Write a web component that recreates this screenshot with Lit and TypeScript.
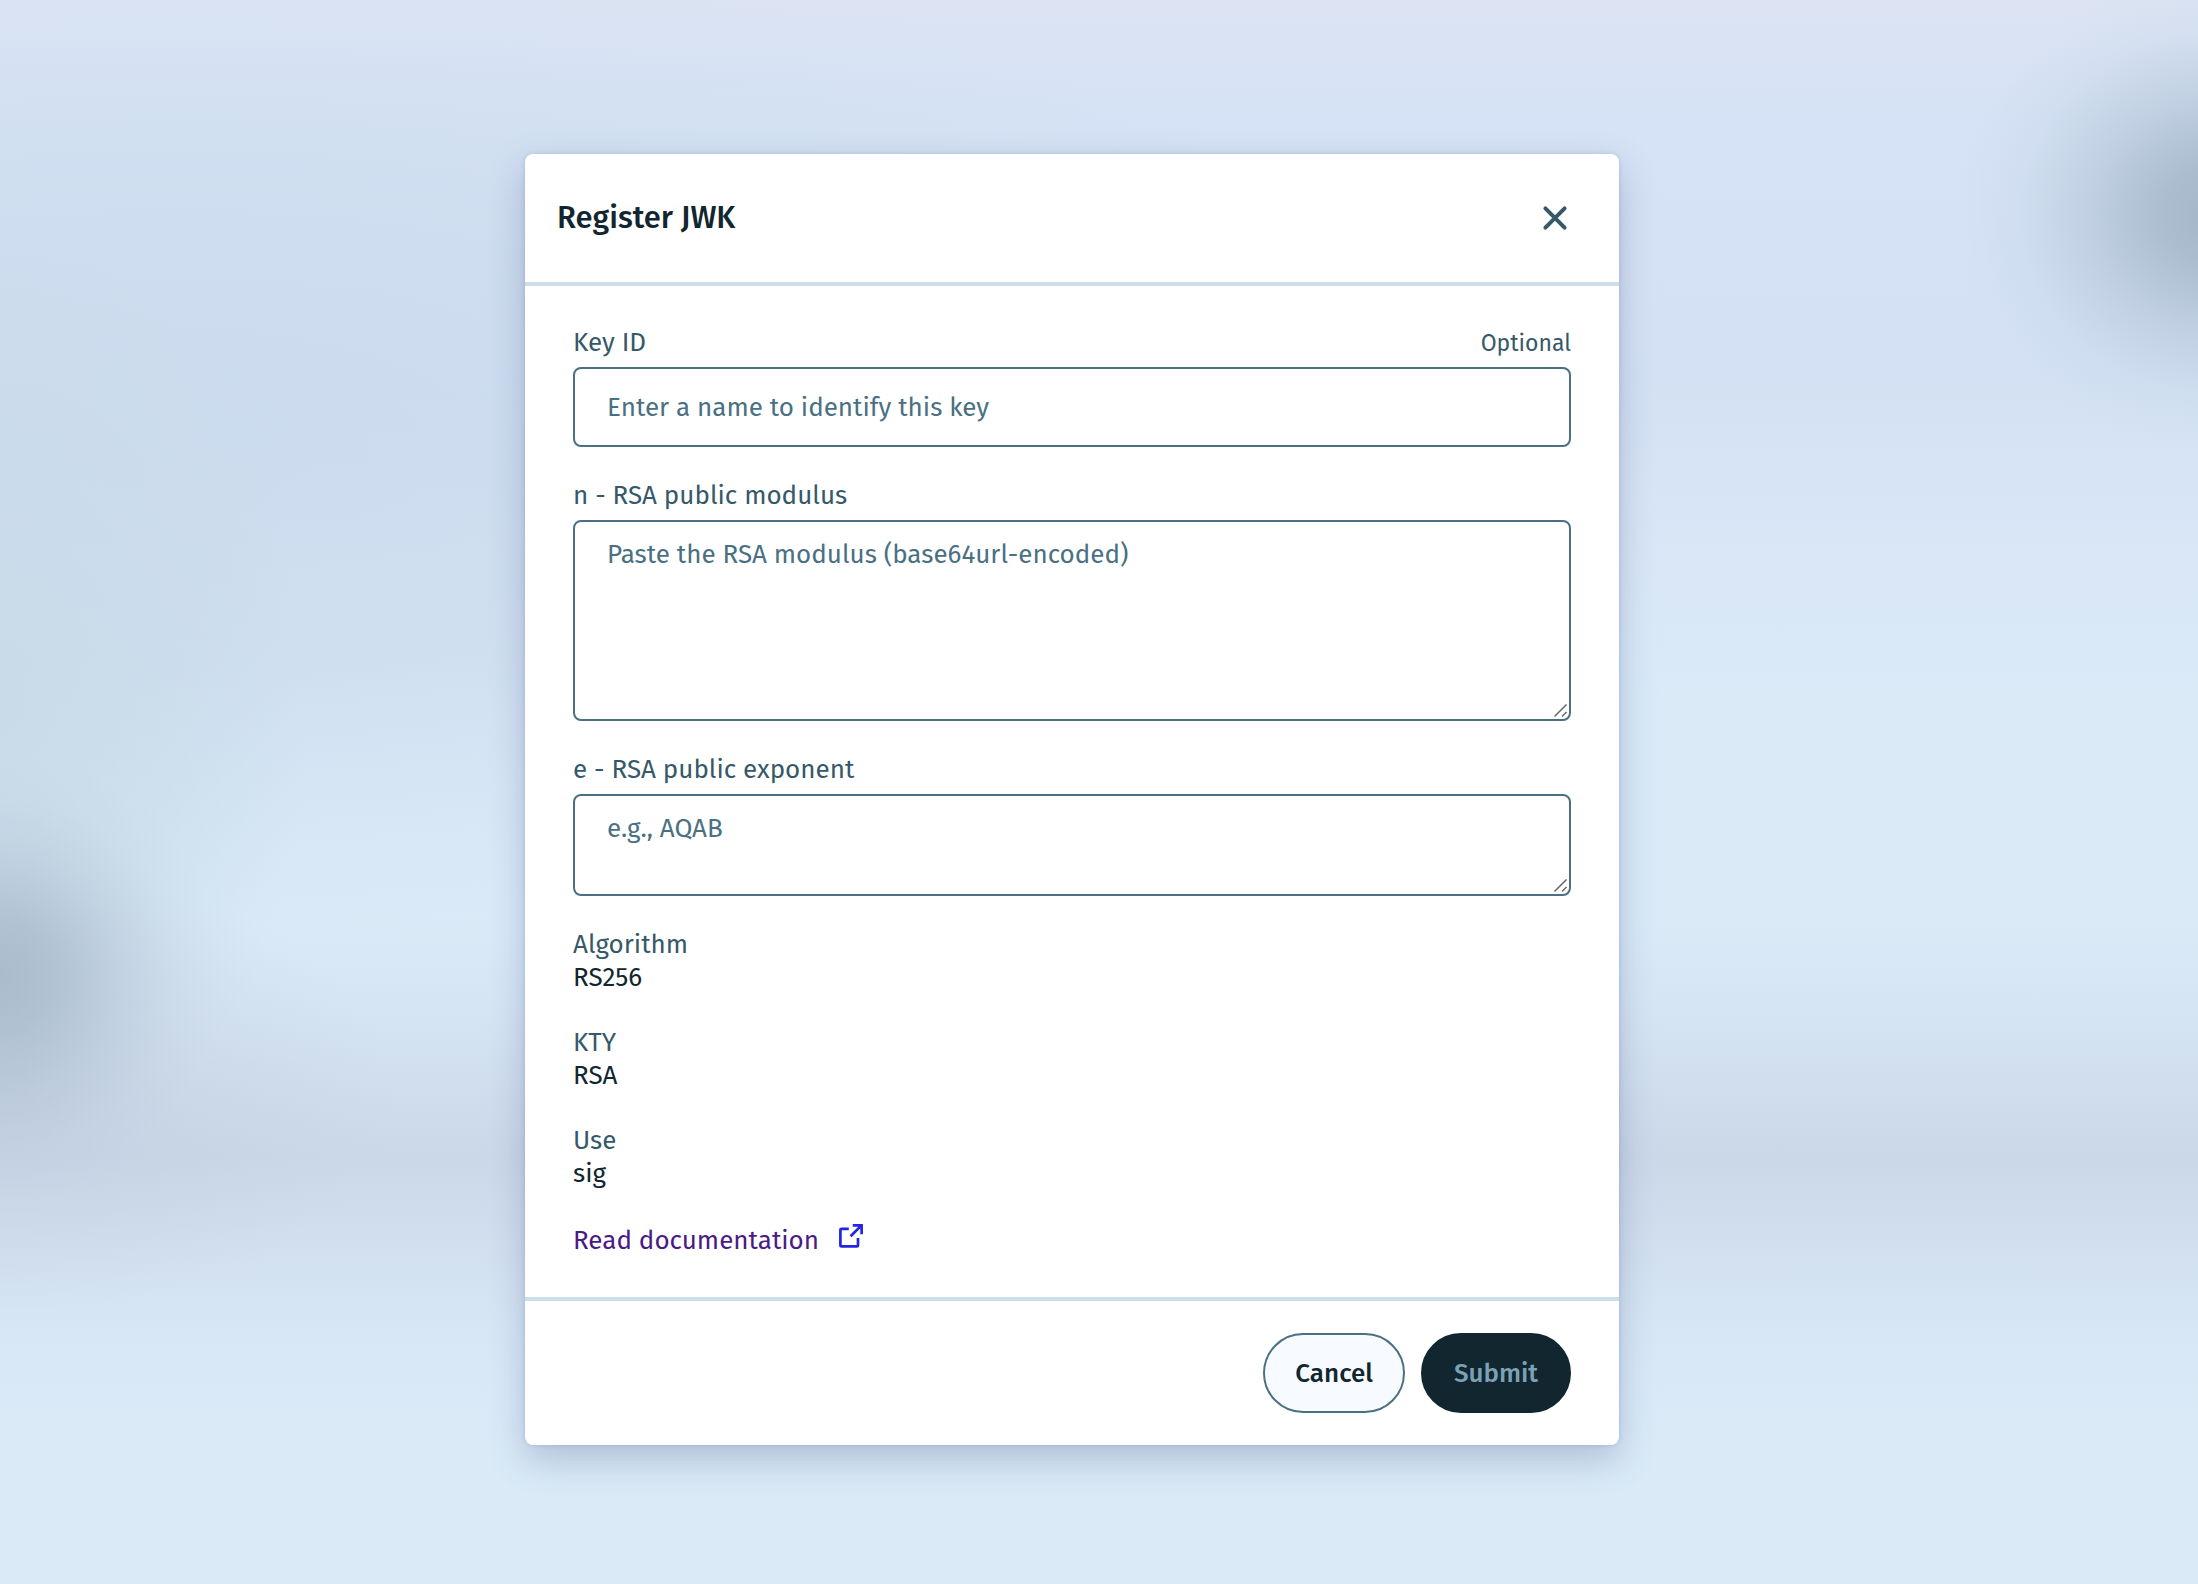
import { LitElement, html, css, svg } from "lit";
import { customElement, state } from "lit/decorators.js";

interface Fact {
  term: string;
  value: string;
}

const FACTS: Fact[] = [
  { term: "Algorithm", value: "RS256" },
  { term: "KTY", value: "RSA" },
  { term: "Use", value: "sig" },
];

const closeIcon = svg`
  <svg class="icon-close" viewBox="0 0 32 32" aria-hidden="true">
    <path d="M6.4 6.4 25.6 25.6M25.6 6.4 6.4 25.6" fill="none" stroke="currentColor"
      stroke-width="4" stroke-linecap="round"/>
  </svg>`;

const externalIcon = svg`
  <svg class="icon-external" viewBox="0 0 24 24" aria-hidden="true">
    <g fill="none" stroke="currentColor" stroke-width="2.7">
      <path d="M9.8 4.8H2.4Q1.4 4.8 1.4 5.8V21.4Q1.4 22.4 2.4 22.4H18Q19 22.4 19 21.4V14"/>
      <path d="M11.6 12.2 22.2 1.6M13.8 1.4H22.6V10.2"/>
    </g>
  </svg>`;

@customElement("app-root")
export class AppRoot extends LitElement {
  @state() private open = true;

  static styles = css`
    :host {
      display: block;
      min-height: 100vh;
      color: #12262f;
      font-family: "Fira Sans", "Noto Sans", "Open Sans", sans-serif;
      font-size: 26px;
      line-height: 33px;
      --slate: #36596a;
      --line: #4a7083;
      --rule: #ccdeea;
    }

    * {
      box-sizing: border-box;
    }

    .backdrop {
      display: flex;
      justify-content: center;
      align-items: flex-start;
      min-height: 100vh;
      padding: 154px 54px 138px 0;
      background:
        radial-gradient(
          ellipse 12% 15% at 101% 13.5%,
          rgba(160, 179, 197, 0.95) 0%,
          rgba(162, 181, 199, 0.82) 22%,
          rgba(170, 188, 206, 0.5) 48%,
          rgba(180, 200, 218, 0.16) 76%,
          rgba(190, 210, 228, 0) 100%
        ),
        radial-gradient(
          ellipse 10% 14% at 0% 61.5%,
          rgba(166, 185, 201, 0.9) 0%,
          rgba(168, 186, 203, 0.75) 25%,
          rgba(176, 192, 209, 0.4) 54%,
          rgba(186, 202, 218, 0.12) 80%,
          rgba(190, 208, 222, 0) 100%
        ),
        radial-gradient(
          ellipse 18% 14% at 0% 69%,
          rgba(182, 194, 212, 0.45) 0%,
          rgba(190, 202, 218, 0.25) 50%,
          rgba(196, 210, 224, 0) 100%
        ),
        linear-gradient(
          to bottom,
          rgba(204, 216, 232, 0) 58%,
          rgba(204, 216, 232, 0.3) 64%,
          rgba(203, 216, 232, 0.8) 70%,
          rgba(202, 215, 231, 0.95) 73%,
          rgba(205, 218, 234, 0.75) 78%,
          rgba(210, 223, 239, 0.3) 84%,
          rgba(212, 226, 240, 0) 90%
        ),
        radial-gradient(
          ellipse 14% 30% at 0% 45%,
          rgba(200, 217, 231, 0.9) 0%,
          rgba(201, 218, 232, 0.55) 55%,
          rgba(202, 219, 234, 0) 100%
        ),
        radial-gradient(
          ellipse 62% 32% at 8% 28%,
          rgba(202, 218, 237, 0.85) 0%,
          rgba(203, 219, 237, 0.7) 45%,
          rgba(206, 222, 239, 0.25) 78%,
          rgba(206, 222, 239, 0) 100%
        ),
        linear-gradient(
          to bottom,
          #dce4f3 0%,
          #d6e2f5 7%,
          #d4e1f4 24%,
          #d9e6f6 34%,
          #daeaf7 44%,
          #daeaf7 100%
        );
    }

    .dialog {
      flex: 0 1 1094px;
      min-width: 0;
      border-radius: 8px;
      background: #fff;
      box-shadow:
        0 0 4px rgba(84, 104, 150, 0.22),
        0 14px 36px rgba(84, 104, 150, 0.33);
    }

    .head {
      display: flex;
      align-items: center;
      justify-content: space-between;
      min-height: 128px;
      padding: 32px 48px 32px 32px;
    }

    .title {
      margin: 0;
      font-size: 31px;
      line-height: 40px;
      font-weight: 500;
    }

    .close {
      display: grid;
      padding: 0;
      border: 0;
      background: none;
      color: var(--slate);
      cursor: pointer;
    }

    .icon-close {
      display: block;
      width: 32px;
      height: 32px;
    }

    .body {
      display: flex;
      flex-direction: column;
      gap: 32px;
      padding: 40px 48px;
      border-top: 4px solid var(--rule);
      border-bottom: 4px solid var(--rule);
    }

    .field {
      display: flex;
      flex-direction: column;
      gap: 8px;
    }

    .field-top {
      display: flex;
      align-items: baseline;
      justify-content: space-between;
      color: var(--slate);
    }

    .hint {
      font-size: 23px;
      line-height: 24px;
    }

    .control {
      display: block;
      width: 100%;
      margin: 0;
      padding: 16px 32px;
      border: 2px solid var(--line);
      border-radius: 8px;
      background: #fff;
      color: #12262f;
      font: inherit;
    }

    input.control {
      height: 80px;
    }

    textarea.control {
      resize: vertical;
      overflow: auto;
    }

    .control::placeholder {
      color: var(--line);
      opacity: 1;
    }

    .control::-webkit-resizer {
      background: url("data:image/svg+xml,%3Csvg xmlns='http://www.w3.org/2000/svg' viewBox='0 0 15 15'%3E%3Cpath d='M.5 12.5l12-12M8 12.5l4.500-4.500' stroke='%23666' stroke-width='1.5' fill='none'/%3E%3C/svg%3E")
        no-repeat right bottom / 15px 15px;
    }

    .facts {
      display: flex;
      flex-direction: column;
      gap: 32px;
      margin: 0;
    }

    .facts dt {
      color: var(--slate);
    }

    .facts dd {
      margin: 0;
    }

    .docs {
      display: flex;
      align-items: flex-start;
      align-self: flex-start;
      gap: 20px;
      padding-top: 2px;
      color: #4b1a85;
      text-decoration: none;
    }

    .icon-external {
      display: block;
      width: 24px;
      height: 24px;
      color: #2424e4;
    }

    .foot {
      display: flex;
      justify-content: flex-end;
      gap: 16px;
      padding: 32px 48px;
    }

    .btn {
      height: 80px;
      padding: 0 30px;
      border: 2px solid var(--line);
      border-radius: 40px;
      background: #f7fbff;
      color: #12262f;
      font: inherit;
      font-weight: 500;
      cursor: pointer;
    }

    .btn-primary {
      min-width: 150px;
      border-color: #12262f;
      background: #12262f;
      color: #7ba1b6;
    }
  `;

  private close() {
    this.open = false;
  }

  private submit(e: Event) {
    e.preventDefault();
  }

  render() {
    return html`<main class="backdrop">${this.open ? this.dialog() : null}</main>`;
  }

  private dialog() {
    return html`
      <form class="dialog" role="dialog" aria-labelledby="title" @submit=${this.submit}>
        <header class="head">
          <h1 class="title" id="title">Register JWK</h1>
          <button class="close" type="button" aria-label="Close" @click=${this.close}>${closeIcon}</button>
        </header>
        <div class="body">
          <div class="field">
            <div class="field-top">
              <label for="kid">Key ID</label>
              <span class="hint" id="kid-hint">Optional</span>
            </div>
            <input class="control" id="kid" type="text" aria-describedby="kid-hint"
              placeholder="Enter a name to identify this key" />
          </div>
          <div class="field">
            <div class="field-top"><label for="n">n - RSA public modulus</label></div>
            <textarea class="control" id="n" rows="5"
              placeholder="Paste the RSA modulus (base64url-encoded)"></textarea>
          </div>
          <div class="field">
            <div class="field-top"><label for="e">e - RSA public exponent</label></div>
            <textarea class="control" id="e" rows="2" placeholder="e.g., AQAB"></textarea>
          </div>
          <dl class="facts">
            ${FACTS.map((f) => html`<div><dt>${f.term}</dt><dd>${f.value}</dd></div>`)}
          </dl>
          <a class="docs" href="#documentation"><span>Read documentation</span>${externalIcon}</a>
        </div>
        <footer class="foot">
          <button class="btn" type="button" @click=${this.close}>Cancel</button>
          <button class="btn btn-primary" type="submit" disabled>Submit</button>
        </footer>
      </form>
    `;
  }
}
